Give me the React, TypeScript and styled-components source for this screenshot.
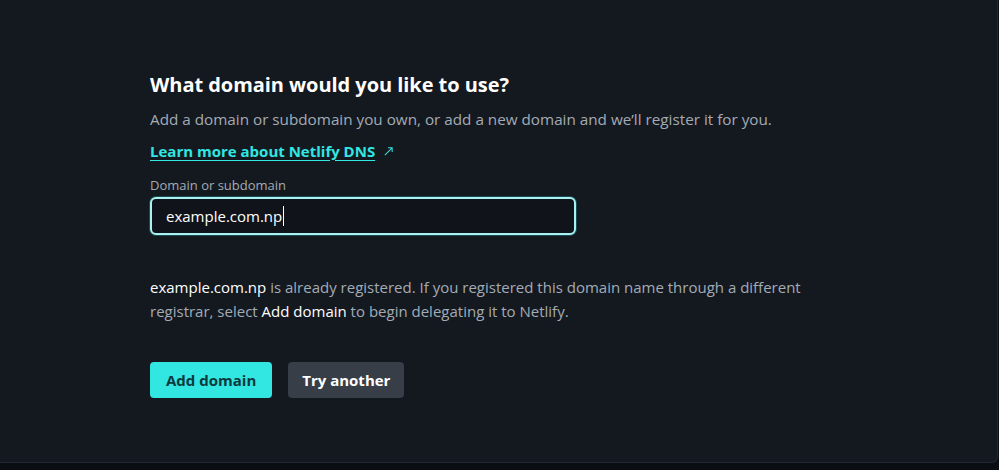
import React from "react";
import styled, { createGlobalStyle } from "styled-components";

const Global = createGlobalStyle`
  html, body { margin: 0; padding: 0; background: #0a0d12; }
  body { font-family: "Open Sans", "Noto Sans", sans-serif; }
  * { box-sizing: border-box; }
`;

const Page = styled.div`
  width: 999px;
  height: 470px;
  background: #0a0d12;
`;

const Card = styled.section`
  width: 998px;
  height: 463px;
  background: #141920;
  border-right: 1px solid #222831;
  border-bottom: 1px solid #222831;
  border-bottom-right-radius: 6px;
  padding: 70px 0 0 150px;
`;

const Title = styled.h2`
  margin: 0;
  font-size: 20px;
  font-weight: 700;
  line-height: 30px;
  letter-spacing: -0.05px;
  color: #ffffff;
`;

const Lead = styled.p`
  margin: 7px 0 0;
  font-size: 15.25px;
  line-height: 24px;
  color: #a3abb5;
`;

const LearnLink = styled.a`
  display: inline-flex;
  align-items: center;
  gap: 8px;
  margin-top: 9px;
  font-size: 15px;
  font-weight: 700;
  line-height: 22px;
  color: #32e6e2;
  text-decoration: none;
  span { text-decoration: underline; text-underline-offset: 3px; }
`;

const Field = styled.div`
  display: flex;
  flex-direction: column;
  gap: 3px;
  margin-top: 14px;
`;

const Label = styled.label`
  font-size: 13px;
  line-height: 18px;
  color: #a3abb5;
`;

const Input = styled.div`
  width: 426px;
  height: 38px;
  border: 2px solid #a8f3f1;
  border-radius: 6px;
  background: #10141a;
  box-shadow: 0 0 0 1px rgba(50, 230, 226, 0.25);
  display: flex;
  align-items: center;
  padding-left: 14px;
  font-size: 15px;
  color: #ffffff;
`;

const Caret = styled.span`
  display: inline-block;
  width: 1px;
  height: 20px;
  background: #ffffff;
  margin-left: 1px;
`;

const Message = styled.p`
  margin: 40px 0 0;
  width: 680px;
  font-size: 15px;
  line-height: 24px;
  color: #a3abb5;
  strong { color: #ffffff; font-weight: 400; }
`;

const Actions = styled.div`
  display: flex;
  gap: 16px;
  margin-top: 39px;
`;

const Button = styled.button<{ $primary?: boolean }>`
  height: 36px;
  padding: 0 ${(p) => (p.$primary ? "16px" : "14px")};
  border: none;
  border-radius: 4px;
  font-family: inherit;
  font-size: 15px;
  font-weight: 700;
  background: ${(p) => (p.$primary ? "#32e6e2" : "#383e47")};
  color: ${(p) => (p.$primary ? "#0c3a3c" : "#ffffff")};
`;

export default function App() {
  return (
    <Page>
      <Global />
      <Card>
        <Title>What domain would you like to use?</Title>
        <Lead>Add a domain or subdomain you own, or add a new domain and we’ll register it for you.</Lead>
        <LearnLink href="#">
          <span>Learn more about Netlify DNS</span>
          <svg width="11" height="11" viewBox="0 0 12 12" fill="none" stroke="#32e6e2" strokeWidth="1.1">
            <path d="M2 10 L10 2 M5.5 2 H10 V6.5" />
          </svg>
        </LearnLink>
        <Field>
          <Label>Domain or subdomain</Label>
          <Input>
            example.com.np<Caret />
          </Input>
        </Field>
        <Message>
          <strong>example.com.np</strong> is already registered. If you registered this domain name through a different
          registrar, select <strong>Add domain</strong> to begin delegating it to Netlify.
        </Message>
        <Actions>
          <Button $primary>Add domain</Button>
          <Button>Try another</Button>
        </Actions>
      </Card>
    </Page>
  );
}
